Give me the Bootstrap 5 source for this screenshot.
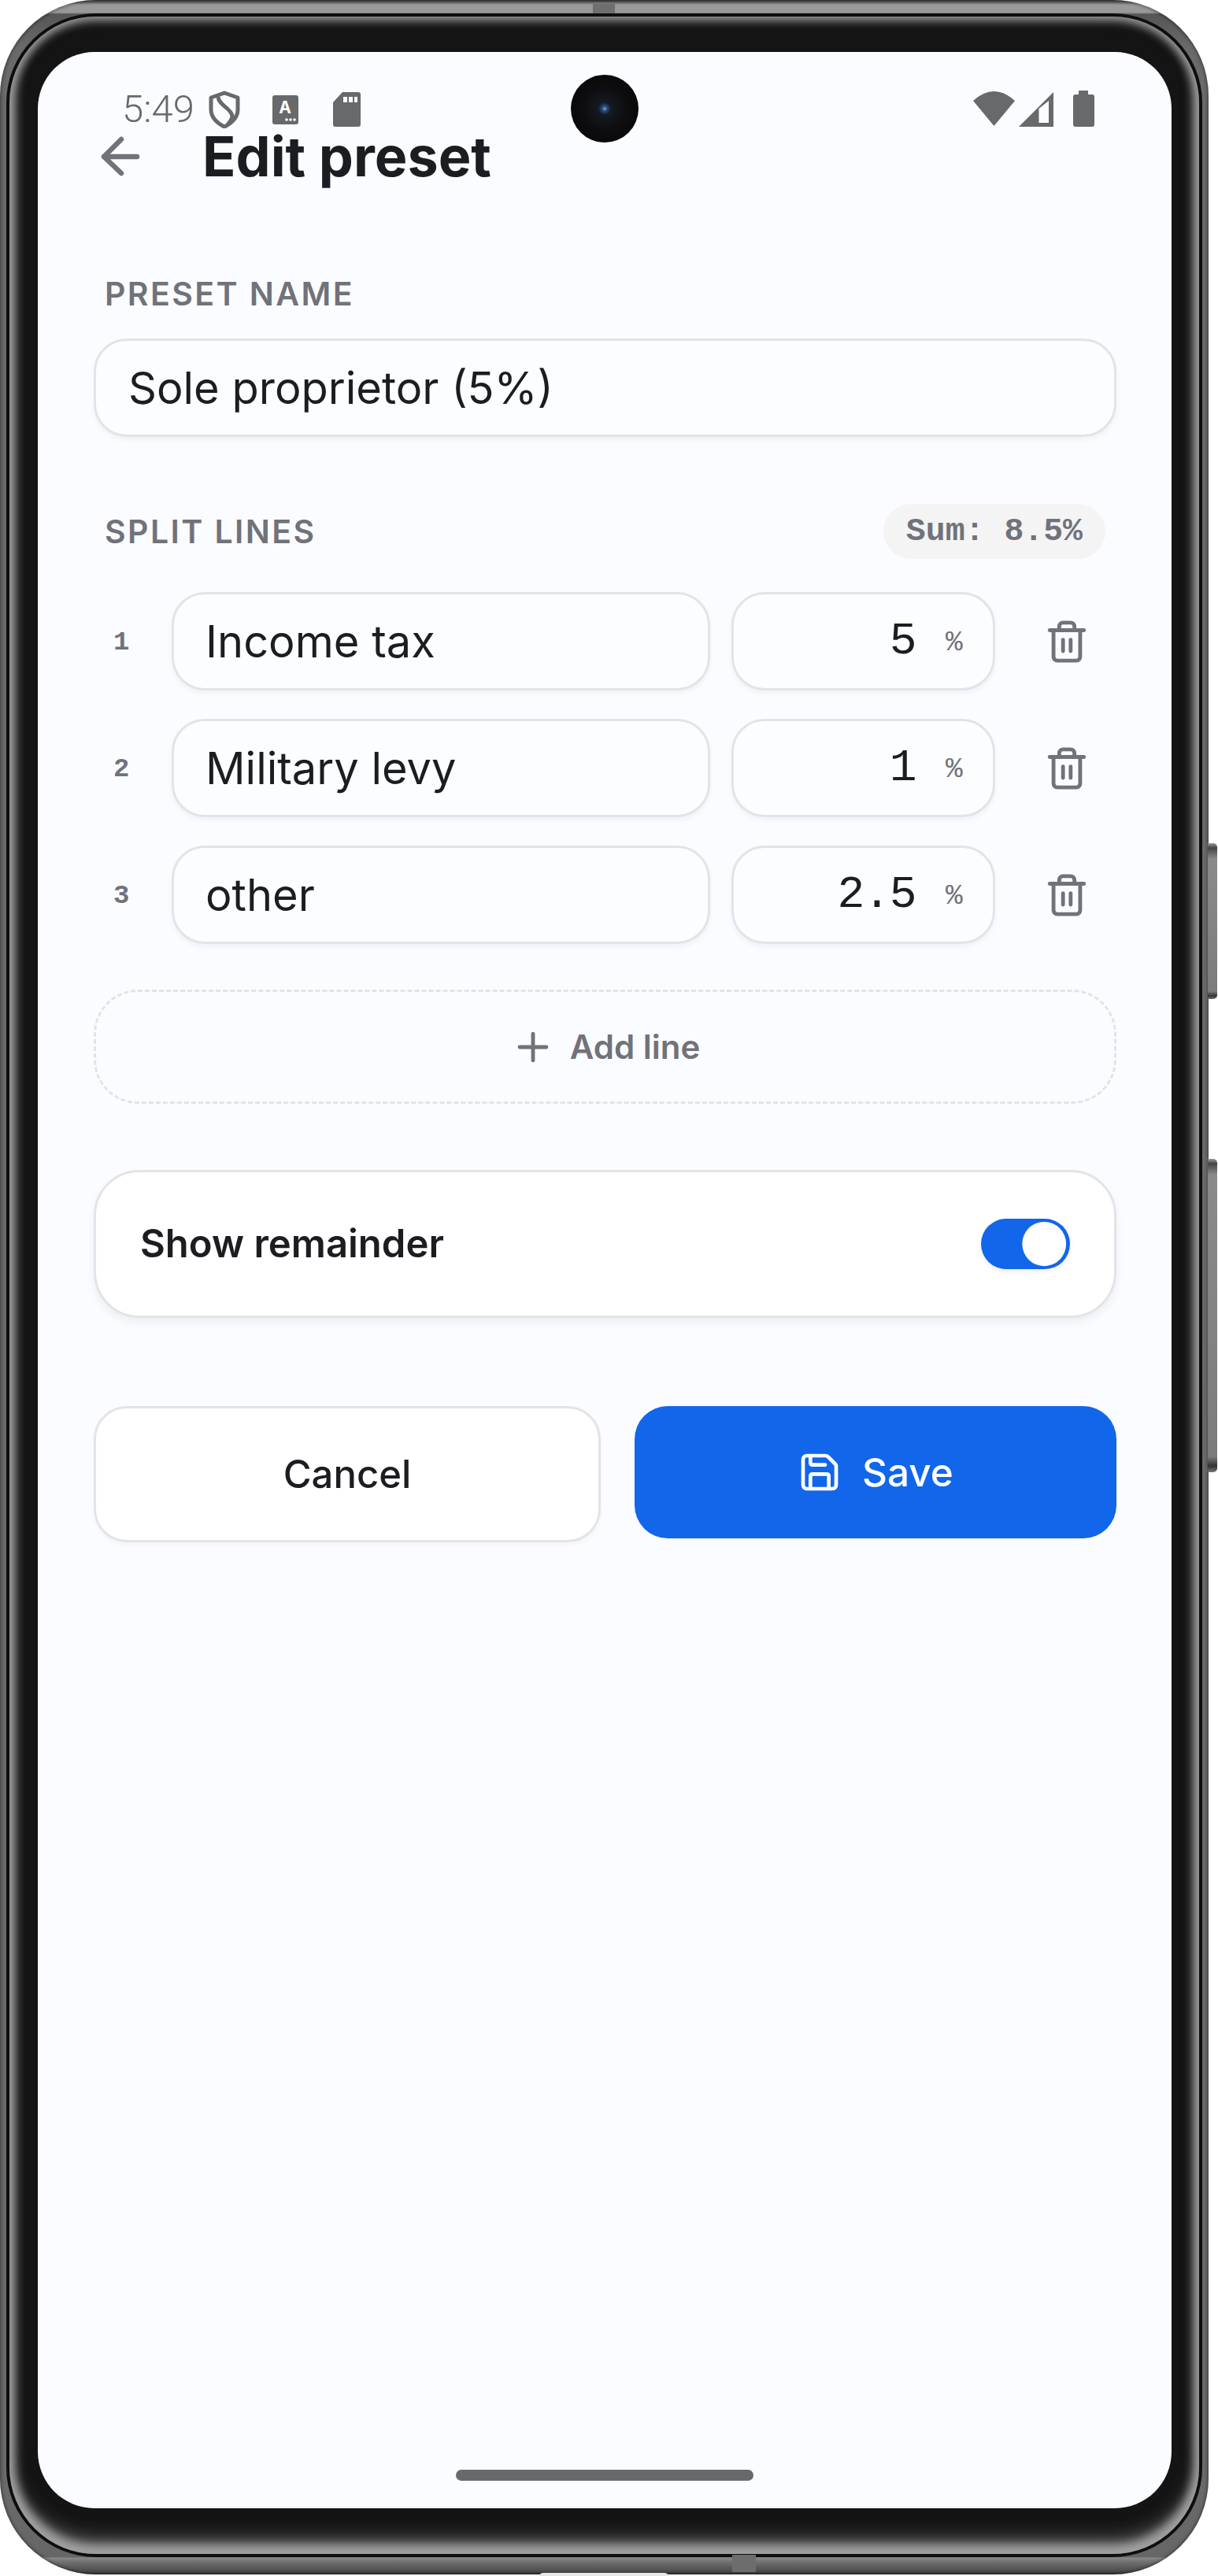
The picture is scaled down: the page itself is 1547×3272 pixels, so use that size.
<!DOCTYPE html>
<html lang="en">
<head>
  <meta charset="UTF-8" />
  <meta name="viewport" content="width=device-width, initial-scale=1" />
  <title>Edit preset</title>
  <link href="https://cdn.jsdelivr.net/npm/bootstrap@5.3.0/dist/css/bootstrap.min.css" rel="stylesheet" />
  <style>
    body { background: #fff; font-family: Inter, "Liberation Sans", sans-serif; color: #1c1d21; }
    .page-wrap { width: 1547px; height: 3272px; position: relative; overflow: hidden; }

    /* device frame */
    .phone-metal {
      width: 1535px; height: 3270px; border-radius: 122px;
      padding: 17px 8px 22px;
      background: linear-gradient(to bottom, #3c3c3c 0, #666 3px, #999 6px, #999 16px, #555 18px, #6a6a6a 60px, #6a6a6a calc(100% - 120px), #666 calc(100% - 22px), #8a8a8a calc(100% - 21px), #707070 calc(100% - 16px), #4a4a4a calc(100% - 3px), #2c2c2c 100%);
      box-shadow: inset 0 0 4px 1px rgba(0,0,0,.45);
    }
    .phone-rim { height: 100%; background: #0e0e0e; border-radius: 114px; padding: 4px; }
    .phone-bezel {
      height: 100%; background: #141414; border-radius: 110px;
      padding: 45px 35px 58px 36px;
      box-shadow: inset 0 -4px 12px 7px #a0a0a0, inset 0 8px 14px -4px #5c5c5c, inset 0 -22px 26px -6px #777;
    }
    .side-key { position: absolute; left: 1534px; width: 12px; border-radius: 0 5px 5px 0; background: linear-gradient(to bottom, #9a9a9a 0, #444 6px, #8a8a8a 20px, #7c7c7c 95%, #333 98%, #777 100%); }
    .side-key.key-a { top: 1071px; height: 198px; }
    .side-key.key-b { top: 1472px; height: 398px; }
    .top-seam { position: absolute; left: 753px; top: 5px; width: 28px; height: 12px; background: #6f6f6f; }
    .bottom-seam { position: absolute; left: 930px; top: 3245px; width: 30px; height: 22px; background: #6d6d6d; }
    .bottom-port { position: absolute; left: 684px; top: 3268px; width: 166px; height: 6px; background: #e8e8e8; border-radius: 6px 6px 0 0; }

    .app-screen {
      height: 3120px; background: #fbfcff; border-radius: 72px; position: relative; overflow: hidden;
    }
    .cam-hole {
      position: absolute; left: 677px; top: 29px; width: 86px; height: 86px; border-radius: 50%;
      background: radial-gradient(circle, #7fb3bf 0, #2b4f82 3px, #141a22 8px, #0e0e10 26px, #050505 100%);
    }
    .status-row { padding: 49px 0 0 107px; height: 90px; color: #68696b; }
    .status-time { font-family: Roboto, sans-serif; font-size: 49px; line-height: 48px; font-weight: 300; margin-right: 18px; }
    .status-a { margin: 6px 0 0 41px; }
    .status-sd { margin: 2px 0 0 43px; }
    .status-right { position: absolute; left: 1188px; top: 49px; }
    .app-head { margin-top: 1px; height: 84px; padding-left: 75px; }
    .head-back { width: 60px; height: 60px; margin-right: 74px; }
    .head-title { font-size: 70px; line-height: 84px; font-weight: 700; margin: 0; }

    .form-area { padding: 107px 70px 0 71px; }
    .field-label { font-size: 41px; line-height: 50px; font-weight: 600; color: #71727a; letter-spacing: 2.4px; padding-left: 14px; }
    .form-control.soft-input {
      height: 125px; padding: 0 41px; font-size: 56px; font-family: Inter, sans-serif; color: #1c1d21;
      background: #fcfdff; border: 3.5px solid #e4e4e7; border-radius: 42px;
      box-shadow: 0 4px 7px rgba(0,0,0,.045);
    }
    .name-block { margin-top: 32px; }
    .split-head { margin-top: 85px; }
    .sum-pill { height: 70px; margin-right: 14px; padding: 0 29px; border-radius: 35px; background: #f4f4f5; color: #71727a; font-family: "Liberation Mono", monospace; font-weight: 700; font-size: 41.5px; line-height: 70px; }
    .split-list { margin-top: 42px; gap: 36px; }
    .line-no { width: 99px; padding: 3px 0 0 25px; font-family: "Liberation Mono", monospace; font-size: 34px; font-weight: 700; color: #71727a; }
    .line-name { width: 684px; flex: none; }
    .form-control.line-name { padding-left: 40px; }
    .pct-wrap { width: 335px; margin-left: 27px; position: relative; flex: none; }
    .form-control.pct-input { text-align: right; padding-right: 98px; font-family: "Liberation Mono", monospace; font-size: 58px; letter-spacing: -1.6px; }
    .pct-sign { position: absolute; left: 272px; top: 44px; font-family: "Liberation Mono", monospace; font-size: 36px; line-height: 42px; color: #71727a; font-weight: 400; }
    .trash-btn { width: 126px; height: 125px; margin-left: 28px; padding: 0; border: 0; background: none; }
    .add-line-btn {
      margin-top: 58px; width: 100%; height: 145px; border: 3px dashed #e4e4e7; border-radius: 56px; background: transparent;
      color: #71727a; font-size: 42px; font-weight: 600; gap: 18px;
    }
    .add-line-btn:hover { color: #71727a; border-color: #e4e4e7; }
    .remainder-card {
      margin-top: 84px; height: 188px; padding: 0 56px; border: 3.5px solid #e4e4e7; border-radius: 58px; background: #fff;
      box-shadow: 0 6px 12px rgba(0,0,0,.06);
    }
    .remainder-text { font-size: 49px; font-weight: 600; }
    .form-switch .form-check-input.big-switch {
      width: 113px; height: 64px; margin: 0; border: 0; border-radius: 32px; float: none;
      background-color: #1166ea; background-size: 75px; background-position: calc(100% + 4.5px) 50%;
      box-shadow: 0 3px 6px rgba(0,0,0,.08);
    }
    .remainder-switch { padding: 0; margin: 0; min-height: 0; }
    .foot-btns { margin-top: 112px; gap: 43px; }
    .btn.cancel-btn {
      width: 644px; height: 173px; border: 3.5px solid #e4e4e7; border-radius: 42px; background: #fff; color: #1c1d21;
      font-size: 49px; font-weight: 500; box-shadow: 0 3px 6px rgba(0,0,0,.04);
    }
    .btn.save-btn {
      width: 612px; height: 168px; border: 0; border-radius: 42px; background: #1166ea; color: #fff;
      font-size: 49.5px; font-weight: 500; gap: 26px;
    }
    .home-bar { position: absolute; left: 531px; top: 3071px; width: 378px; height: 14px; border-radius: 7px; background: #68696b; }
  </style>
</head>
<body class="m-0">
  <div class="page-wrap">
    <div class="phone-metal">
      <div class="phone-rim">
        <div class="phone-bezel">
          <div class="app-screen">
            <div class="cam-hole"></div>

            <div class="status-row d-flex align-items-start">
              <span class="status-time">5:49</span>
              <svg width="40" height="48" viewBox="0 0 40 48" fill="none" stroke="#68696b" stroke-width="5">
                <path d="M20 3 L37 9 V24 C37 34 30 41 20 46 C10 41 3 34 3 24 V9 Z" stroke-linejoin="round"/>
                <path d="M12 8 C13 19 28 22 30 32 C30 36 27 40 24 43"/>
              </svg>
              <svg width="34" height="38" viewBox="0 0 34 38" class="status-a">
                <rect width="33" height="37" rx="3" fill="#68696b"/>
                <text x="16" y="23" text-anchor="middle" font-family="Inter, sans-serif" font-weight="700" font-size="21" fill="#fff">A</text>
                <circle cx="18" cy="31" r="1.8" fill="#fff"/><circle cx="23" cy="31" r="1.8" fill="#fff"/><circle cx="28" cy="31" r="1.8" fill="#fff"/>
              </svg>
              <svg width="36" height="45" viewBox="0 0 36 45" class="status-sd">
                <path d="M12 0 H32 Q35 0 35 3 V41 Q35 44 32 44 H3 Q0 44 0 41 V13 Z" fill="#68696b"/>
                <path d="M13 6 h5 v7 h-5z M20 6 h5 v7 h-5z M27 6 h4 v7 h-4z" fill="#fbfcff"/>
              </svg>
            </div>
            <div class="status-right d-flex">
              <svg width="154" height="48" viewBox="1236 115 154 48">
                <path d="M1262.5 160 L1236 128 Q1262.5 104 1289 128 Z" fill="#68696b"/>
                <path d="M1294 161 L1338 117 V161 Z" fill="#68696b"/>
                <path d="M1319.5 156 V138 L1332 128 V156 Z" fill="#fbfcff"/>
                <rect x="1363" y="120" width="27" height="41" rx="3" fill="#68696b"/>
                <rect x="1370" y="115" width="12" height="7" rx="1" fill="#68696b"/>
              </svg>
            </div>

            <div class="app-head d-flex align-items-center">
              <svg class="head-back" viewBox="0 0 60 60" fill="none" stroke="#71727a" stroke-width="6.5" stroke-linecap="round" stroke-linejoin="round">
                <path d="M51 30 H9 M31 8 L9 30 L31 51"/>
              </svg>
              <h1 class="head-title">Edit preset</h1>
            </div>

            <div class="form-area">
              <div class="field-label">PRESET NAME</div>
              <input class="form-control soft-input name-block" value="Sole proprietor (5%)" />

              <div class="split-head d-flex justify-content-between align-items-center">
                <div class="field-label">SPLIT LINES</div>
                <div class="sum-pill">Sum: 8.5%</div>
              </div>

              <div class="split-list d-flex flex-column">
                <div class="d-flex align-items-center">
                  <span class="line-no">1</span>
                  <input class="form-control soft-input line-name" value="Income tax" />
                  <div class="pct-wrap">
                    <input class="form-control soft-input pct-input" value="5" />
                    <span class="pct-sign">%</span>
                  </div>
                  <button class="btn trash-btn" type="button" aria-label="Delete">
                    <svg width="58" height="58" viewBox="0 0 24 24" fill="none" stroke="#71727a" stroke-width="2" stroke-linecap="round" stroke-linejoin="round"><path d="M3 6h18"/><path d="M19 6v14a2 2 0 0 1-2 2H7a2 2 0 0 1-2-2V6"/><path d="M8 6V4a2 2 0 0 1 2-2h4a2 2 0 0 1 2 2v2"/><path d="M10 11v6"/><path d="M14 11v6"/></svg>
                  </button>
                </div>
                <div class="d-flex align-items-center">
                  <span class="line-no">2</span>
                  <input class="form-control soft-input line-name" value="Military levy" />
                  <div class="pct-wrap">
                    <input class="form-control soft-input pct-input" value="1" />
                    <span class="pct-sign">%</span>
                  </div>
                  <button class="btn trash-btn" type="button" aria-label="Delete">
                    <svg width="58" height="58" viewBox="0 0 24 24" fill="none" stroke="#71727a" stroke-width="2" stroke-linecap="round" stroke-linejoin="round"><path d="M3 6h18"/><path d="M19 6v14a2 2 0 0 1-2 2H7a2 2 0 0 1-2-2V6"/><path d="M8 6V4a2 2 0 0 1 2-2h4a2 2 0 0 1 2 2v2"/><path d="M10 11v6"/><path d="M14 11v6"/></svg>
                  </button>
                </div>
                <div class="d-flex align-items-center">
                  <span class="line-no">3</span>
                  <input class="form-control soft-input line-name" value="other" />
                  <div class="pct-wrap">
                    <input class="form-control soft-input pct-input" value="2.5" />
                    <span class="pct-sign">%</span>
                  </div>
                  <button class="btn trash-btn" type="button" aria-label="Delete">
                    <svg width="58" height="58" viewBox="0 0 24 24" fill="none" stroke="#71727a" stroke-width="2" stroke-linecap="round" stroke-linejoin="round"><path d="M3 6h18"/><path d="M19 6v14a2 2 0 0 1-2 2H7a2 2 0 0 1-2-2V6"/><path d="M8 6V4a2 2 0 0 1 2-2h4a2 2 0 0 1 2 2v2"/><path d="M10 11v6"/><path d="M14 11v6"/></svg>
                  </button>
                </div>
              </div>

              <button class="btn add-line-btn d-flex align-items-center justify-content-center" type="button">
                <svg width="58" height="58" viewBox="0 0 24 24" fill="none" stroke="#71727a" stroke-width="2" stroke-linecap="round"><path d="M5 12h14"/><path d="M12 5v14"/></svg>
                <span>Add line</span>
              </button>

              <div class="remainder-card d-flex align-items-center justify-content-between">
                <span class="remainder-text">Show remainder</span>
                <div class="form-check form-switch remainder-switch d-flex">
                  <input class="form-check-input big-switch" type="checkbox" role="switch" checked />
                </div>
              </div>

              <div class="foot-btns d-flex align-items-start">
                <button class="btn cancel-btn" type="button">Cancel</button>
                <button class="btn save-btn d-flex align-items-center justify-content-center" type="button">
                  <svg width="56" height="56" viewBox="0 0 24 24" fill="none" stroke="#fff" stroke-width="2" stroke-linecap="round" stroke-linejoin="round"><path d="M15.2 3a2 2 0 0 1 1.4.6l3.8 3.8a2 2 0 0 1 .6 1.4V19a2 2 0 0 1-2 2H5a2 2 0 0 1-2-2V5a2 2 0 0 1 2-2z"/><path d="M17 21v-7a1 1 0 0 0-1-1H8a1 1 0 0 0-1 1v7"/><path d="M7 3v4a1 1 0 0 0 1 1h7"/></svg>
                  <span>Save</span>
                </button>
              </div>
            </div>

            <div class="home-bar"></div>
          </div>
        </div>
      </div>
    </div>
    <div class="side-key key-a"></div>
    <div class="side-key key-b"></div>
    <div class="top-seam"></div>
    <div class="bottom-seam"></div>
    <div class="bottom-port"></div>
  </div>
  <script src="https://cdn.jsdelivr.net/npm/bootstrap@5.3.0/dist/js/bootstrap.bundle.min.js"></script>
</body>
</html>
